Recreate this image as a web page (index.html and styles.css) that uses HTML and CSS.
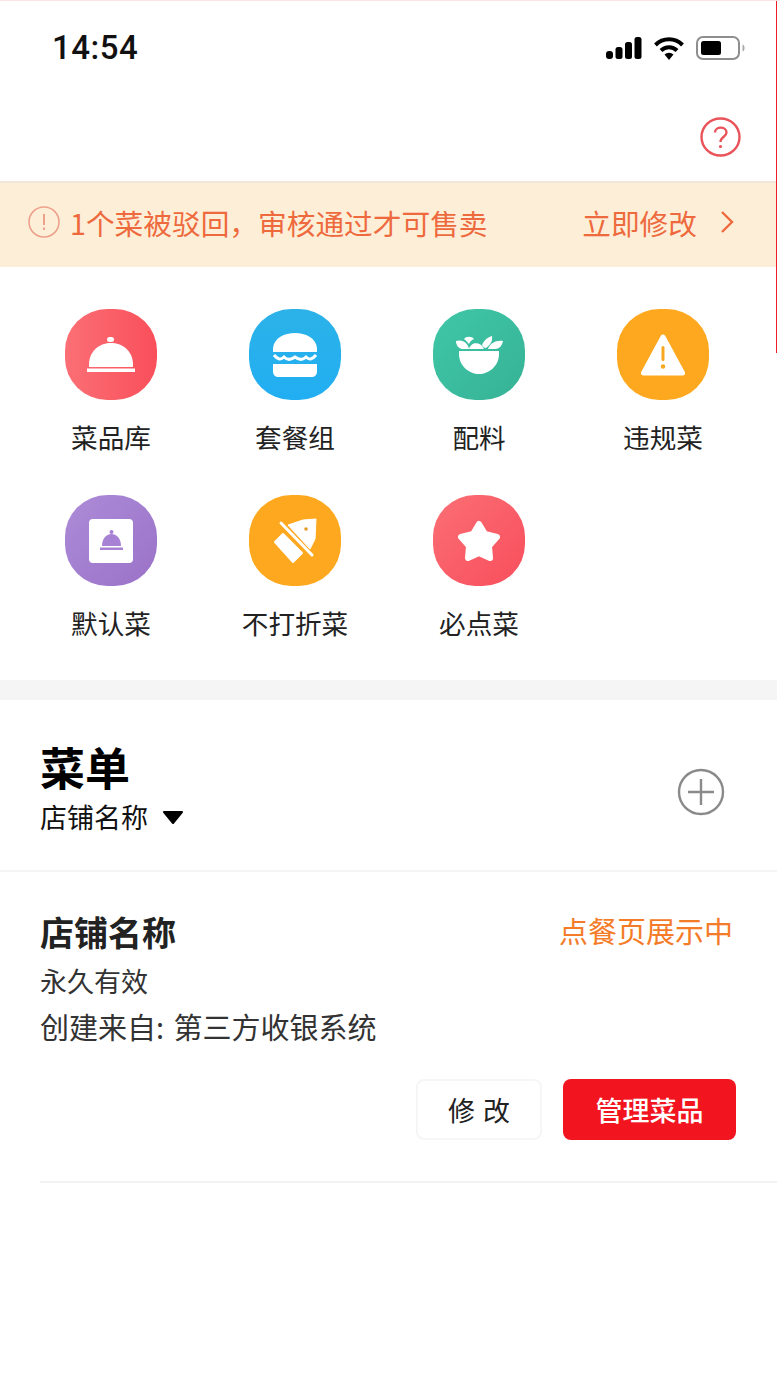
FILE: index.html
```html
<!DOCTYPE html>
<html lang="zh-CN">

<head>
    <meta charset="UTF-8">
    <meta name="viewport" content="width=device-width, initial-scale=1.0">
    <title>菜单管理</title>
    <link rel="stylesheet" href="styles.css">
</head>

<body>
    <div class="edge-line"></div>

    <div class="status-bar">
        <span class="time">14:54</span>
        <div class="status-icons">
            <svg width="36" height="22" viewBox="0 0 36 22">
                <rect x="0" y="14" width="7" height="8" rx="3" fill="#000" />
                <rect x="9.500" y="10" width="7" height="12" rx="2.500" fill="#000" />
                <rect x="19" y="5" width="7" height="17" rx="2.500" fill="#000" />
                <rect x="28.500" y="0" width="7" height="22" rx="2.500" fill="#000" />
            </svg>
            <svg width="32" height="24" viewBox="0 0 32 24">
                <path d="M2.500 9 A19 19 0 0 1 29.500 9" fill="none" stroke="#000" stroke-width="4" />
                <path d="M8 14.500 A11.500 11.500 0 0 1 24 14.500" fill="none" stroke="#000" stroke-width="4" />
                <path d="M11.500 18.500 A6.500 6.500 0 0 1 20.500 18.500 L16 24 Z" fill="#000" />
            </svg>
            <svg width="49" height="26" viewBox="0 0 49 26">
                <rect x="1" y="2" width="42" height="22" rx="6" fill="none" stroke="#8e8e8e" stroke-width="2" />
                <rect x="5" y="6" width="20" height="14" rx="2.500" fill="#000" />
                <path d="M46.500 9.500 C48 10 48.500 11 48.500 13 C48.500 15 48 16 46.500 16.500 Z" fill="#a8a8a8" />
            </svg>
        </div>
    </div>

    <div class="nav-bar">
        <svg class="help-icon" width="41" height="40" viewBox="0 0 41 40">
            <ellipse cx="20.500" cy="20" rx="19" ry="18.500" fill="none" stroke="#e9545a" stroke-width="2.400" />
            <path d="M15 15.500 C15 9 26.500 9 26.500 15.500 C26.500 20 20.500 19.500 20.500 25" fill="none" stroke="#e9545a" stroke-width="2.400" />
            <circle cx="20.500" cy="29.500" r="1.600" fill="#e9545a" />
        </svg>
    </div>

    <div class="notice">
        <div class="notice-left">
            <svg width="32" height="32" viewBox="0 0 32 32">
                <circle cx="16" cy="16" r="15" fill="none" stroke="#eda18c" stroke-width="1.600" />
                <rect x="15" y="8" width="2" height="11" fill="#eda18c" />
                <rect x="15" y="21.500" width="2" height="2.500" fill="#eda18c" />
            </svg>
            <span>1个菜被驳回，审核通过才可售卖</span>
        </div>
        <div class="notice-right">
            <span>立即修改</span>
            <svg width="14" height="24" viewBox="0 0 14 24">
                <path d="M2 2 L12 12 L2 22" fill="none" stroke="#ee6a3e" stroke-width="2.400" />
            </svg>
        </div>
    </div>

    <div class="entry-grid">
        <div class="entry">
            <div class="entry-icon red">
                <svg width="48" height="35" viewBox="0 0 48 35">
                    <rect x="20" y="0" width="7" height="5" rx="2.500" fill="#fff" />
                    <path d="M2 30 L2 27 C3 -1 45 -1 46 27 L46 30 Z" fill="#fff" />
                    <rect x="0" y="31.500" width="48" height="3.500" fill="#fff" />
                </svg>
            </div>
            <span class="entry-label">菜品库</span>
        </div>
        <div class="entry">
            <div class="entry-icon blue">
                <svg width="44" height="44" viewBox="0 0 44 44">
                    <path d="M0 19 L0 15 C2 -5 42 -5 44 15 L44 19 Z" fill="#fff" />
                    <path d="M1 22 C5 27 8 27 11 24 C14 27 18 27 22 24 C26 27 30 27 33 24 C36 27 39 27 43 22" fill="none" stroke="#fff" stroke-width="3" />
                    <path d="M0 31 L44 31 L44 38 C44 42 42 44 38 44 L6 44 C2 44 0 42 0 38 Z" fill="#fff" />
                </svg>
            </div>
            <span class="entry-label">套餐组</span>
        </div>
        <div class="entry">
            <div class="entry-icon green">
                <svg width="47" height="38" viewBox="0 0 47 38">
                    <path d="M3 15 L43 15 L43 18 C43 30 33 38 23 38 C13 38 3 30 3 18 Z" fill="#fff" />
                    <path d="M0 5 C5 3 12 6 13 13 L6 13 C2 12 0 9 0 5 Z" fill="#fff" />
                    <path d="M8 3 C10 0 16 0 18 3 C15 4 14 6 13 8 C11 6 10 4 8 3 Z" fill="#fff" />
                    <path d="M13 13 C15 6 24 5 28 13 Z" fill="#fff" />
                    <path d="M26 9 C28 4 32 1 36 0 C37 5 34 9 30 12 C28 12 27 11 26 9 Z" fill="#fff" />
                    <path d="M32 13 C34 7 40 4 47 5 C46 10 43 13 39 13 Z" fill="#fff" />
                </svg>
            </div>
            <span class="entry-label">配料</span>
        </div>
        <div class="entry">
            <div class="entry-icon orange">
                <svg width="44" height="42" viewBox="0 0 44 42">
                    <path d="M22 3 L41.500 39 L2.500 39 Z" fill="#fff" stroke="#fff" stroke-width="5" stroke-linejoin="round" />
                    <rect x="20.500" y="12" width="3" height="15" rx="1.500" fill="#f8a81e" />
                    <circle cx="22" cy="32.500" r="2.200" fill="#f8a81e" />
                </svg>
            </div>
            <span class="entry-label">违规菜</span>
        </div>
        <div class="entry">
            <div class="entry-icon purple">
                <svg width="44" height="44" viewBox="0 0 44 44">
                    <rect x="0" y="0" width="44" height="44" rx="4" fill="#fff" />
                    <circle cx="22.500" cy="13" r="2" fill="#a681d4" />
                    <path d="M13 27 C13 11 32 11 32 27 Z" fill="#a681d4" />
                    <rect x="11" y="28.500" width="23" height="2.500" fill="#a681d4" />
                </svg>
            </div>
            <span class="entry-label">默认菜</span>
        </div>
        <div class="entry">
            <div class="entry-icon orange">
                <svg width="44" height="46" viewBox="0 0 44 46">
                    <path d="M15 7 L30 2 L43 1 L42 21 L37 31 Z" fill="#fff" stroke="#fff" stroke-width="1" stroke-linejoin="round" />
                    <path d="M2 24 L10 16 L29 35 L20 44 Z" fill="#fff" stroke="#fff" stroke-width="2" stroke-linejoin="round" />
                    <path d="M8 5 L39 37" stroke="#fff" stroke-width="3" stroke-linecap="round" />
                    <circle cx="33" cy="11" r="1.800" fill="#e59a2a" />
                </svg>
            </div>
            <span class="entry-label">不打折菜</span>
        </div>
        <div class="entry">
            <div class="entry-icon coral">
                <svg width="44" height="42" viewBox="0 0 44 42">
                    <path d="M22 4 L28 14 L40 17 L32 26 L33 38 L22 33 L11 38 L12 26 L4 17 L16 14 Z" fill="#fff" stroke="#fff" stroke-width="6" stroke-linejoin="round" />
                </svg>
            </div>
            <span class="entry-label">必点菜</span>
        </div>
    </div>

    <div class="section-gap"></div>

    <div class="menu-head">
        <div>
            <h2 class="menu-title">菜单</h2>
            <div class="shop-picker">
                <span>店铺名称</span>
                <svg width="22" height="14" viewBox="0 0 22 14">
                    <path d="M2 2 L20 2 L11 13 Z" fill="#000" stroke="#000" stroke-width="2" stroke-linejoin="round" />
                </svg>
            </div>
        </div>
        <svg class="add-icon" width="48" height="48" viewBox="0 0 48 48">
            <circle cx="24" cy="24" r="22" fill="none" stroke="#8a8a8a" stroke-width="2.400" />
            <path d="M24 11 L24 37 M11 24 L37 24" stroke="#8a8a8a" stroke-width="2.400" />
        </svg>
    </div>

    <div class="menu-card">
        <div class="card-top">
            <h3 class="card-title">店铺名称</h3>
            <span class="card-status">点餐页展示中</span>
        </div>
        <p class="card-line">永久有效</p>
        <p class="card-line source">创建来自: 第三方收银系统</p>
        <div class="card-actions">
            <button type="button" class="btn-edit">修 改</button>
            <button type="button" class="btn-manage">管理菜品</button>
        </div>
    </div>
</body>

</html>
```
FILE: styles.css
```css
* {
    box-sizing: border-box;
}

body {
    margin: 0;
    height: 1384px;
    background-color: #fff;
    font-family: "Noto Sans CJK SC", "Noto Sans", sans-serif;
    color: #222;
    overflow: hidden;
    border-top: 1px solid #fbe3e6;
    position: relative;
}

.edge-line {
    position: absolute;
    top: 0;
    right: 3px;
    width: 1px;
    height: 352px;
    background-color: #ee1c25;
}

/* status bar */
.status-bar {
    height: 94px;
    padding: 26px 35px 0 52px;
    display: flex;
    justify-content: space-between;
    align-items: flex-start;
}

.time {
    font-family: Roboto, "Liberation Sans", sans-serif;
    font-size: 33px;
    line-height: 42px;
    font-weight: 500;
    letter-spacing: 0.5px;
    color: #111;
}

.status-icons {
    display: flex;
    align-items: center;
    gap: 11px;
    height: 42px;
}

.nav-bar {
    height: 86px;
    padding: 22px 39px 0 0;
    display: flex;
    justify-content: flex-end;
}

.help-icon {
    display: block;
}

/* notice */
.notice {
    height: 86px;
    width: 777px;
    background-color: #fdefd7;
    border-top: 2px solid #f0e7da;
    padding: 0 43px 6px 28px;
    display: flex;
    justify-content: space-between;
    align-items: center;
    color: #ee6a3e;
    font-size: 28.700px;
}

.notice-left {
    display: flex;
    align-items: center;
    gap: 10px;
}

.notice-right {
    display: flex;
    align-items: center;
    gap: 23px;
}

/* entries */
.entry-grid {
    width: 736px;
    margin-left: 19px;
    padding-top: 42px;
    display: grid;
    grid-template-columns: repeat(4, 184px);
    row-gap: 39px;
}

.entry {
    display: flex;
    flex-direction: column;
    align-items: center;
    gap: 18px;
}

.entry-icon {
    width: 92px;
    height: 91px;
    border-radius: 46%;
    display: flex;
    align-items: center;
    justify-content: center;
}

.entry-icon.red {
    background: linear-gradient(to right, #fb6f75, #f94f5b);
}

.entry-icon.blue {
    background: linear-gradient(to bottom, #2cb2e8, #21aef2);
}

.entry-icon.green {
    background: linear-gradient(135deg, #3fc7a8, #37b295);
}

.entry-icon.orange {
    background-color: #fda81e;
}

.entry-icon.purple {
    background: linear-gradient(135deg, #ad8cd8, #9a72c8);
}

.entry-icon.coral {
    background: linear-gradient(135deg, #fb6f75, #f84e5c);
}

.entry-label {
    font-size: 26.600px;
    line-height: 38px;
    color: #222;
}

.section-gap {
    width: 777px;
    height: 20px;
    margin-top: 38px;
    background-color: #f5f5f5;
}

/* menu head */
.menu-head {
    width: 777px;
    height: 172px;
    padding: 38px 52px 0 40px;
    display: flex;
    justify-content: space-between;
    border-bottom: 2px solid #f5f5f5;
}

.menu-title {
    margin: 0;
    font-size: 45px;
    line-height: 58px;
    font-weight: 700;
    color: #000;
}

.shop-picker {
    margin-top: 3px;
    display: flex;
    align-items: center;
    gap: 14px;
    font-size: 27px;
    line-height: 36px;
    color: #111;
}

.add-icon {
    margin-top: 30px;
}

/* card */
.menu-card {
    width: 737px;
    margin-left: 40px;
    padding: 37px 41px 0 0;
    height: 311px;
    border-bottom: 2px solid #f3f3f3;
}

.card-top {
    display: flex;
    justify-content: space-between;
    align-items: flex-start;
}

.card-title {
    margin: 0;
    font-size: 34px;
    line-height: 46px;
    font-weight: 700;
    color: #222;
}

.card-status {
    margin-right: 3px;
    font-size: 29px;
    line-height: 42px;
    color: #f47b28;
}

.card-line {
    margin: 3px 0 0;
    font-size: 27px;
    line-height: 46px;
    color: #333;
}

.card-line.source {
    margin-top: 0;
    font-size: 29px;
    line-height: 45px;
    word-spacing: 3px;
}

.card-actions {
    margin-top: 30px;
    display: flex;
    justify-content: flex-end;
    gap: 21px;
}

.btn-edit,
.btn-manage {
    height: 61px;
    border-radius: 8px;
    font-family: inherit;
    font-size: 27px;
    padding: 0;
}

.btn-edit {
    width: 126px;
    background-color: #fff;
    border: 2px solid #f6f6f6;
    color: #222;
    word-spacing: 2px;
}

.btn-manage {
    width: 173px;
    background-color: #f2151f;
    border: none;
    color: #fff;
    font-weight: 500;
}
```
